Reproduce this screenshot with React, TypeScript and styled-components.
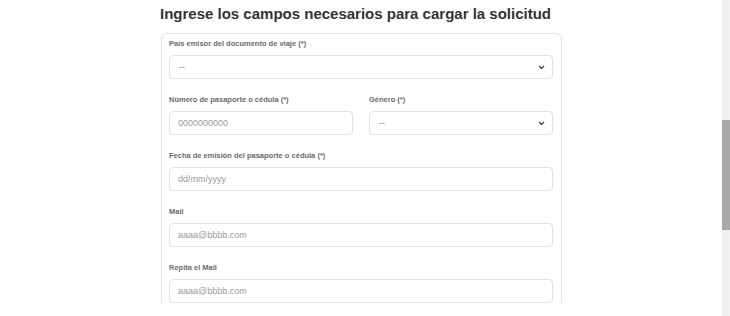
import React from "react";
import styled, { createGlobalStyle } from "styled-components";

const Global = createGlobalStyle`
  html, body { margin: 0; padding: 0; background: #ffffff; overflow: hidden; }
  body { font-family: "Liberation Sans", Arial, sans-serif; }
  * { box-sizing: border-box; }
`;

const Page = styled.div`
  display: flex;
  width: 730px;
  height: 316px;
  overflow: hidden;
`;

const Main = styled.main`
  flex: 1;
  padding-left: 161px;
`;

const Title = styled.h1`
  margin: 4px 0 0 -1px;
  font-size: 15px;
  line-height: 20px;
  font-weight: 700;
  color: #333333;
`;

const Card = styled.div`
  margin-top: 9px;
  width: 401px;
  border: 1px solid #e4e4e4;
  border-bottom: none;
  border-radius: 6px 6px 0 0;
  padding: 5px 8px 0 7px;
  display: flex;
  flex-direction: column;
  gap: 16px;
`;

const Row = styled.div`
  display: grid;
  grid-template-columns: 1fr 1fr;
  column-gap: 16px;
`;

const Field = styled.div`
  display: flex;
  flex-direction: column;
`;

const Label = styled.label`
  font-size: 7.5px;
  line-height: 10px;
  font-weight: 700;
  color: #6b6b6b;
  margin-bottom: 6px;
`;

const Input = styled.input`
  height: 24px;
  width: 100%;
  border: 1px solid #e2e2e2;
  border-radius: 4px;
  padding: 0 8px;
  font-family: "Liberation Sans", Arial, sans-serif;
  font-size: 9px;
  color: #333;
  background: #fff;
  outline: none;
  &::placeholder { color: #9a9a9a; }
`;

const SelectBox = styled.div`
  height: 24px;
  width: 100%;
  border: 1px solid #e2e2e2;
  border-radius: 4px;
  padding: 0 7px 0 9px;
  display: flex;
  align-items: center;
  justify-content: space-between;
  font-size: 9px;
  color: #888;
  background: #fff;
`;

const Scrollbar = styled.div`
  width: 8px;
  height: 316px;
  background: #f1f1f1;
  display: flex;
  flex-direction: column;
  align-items: stretch;
  padding-top: 120px;
`;

const Thumb = styled.div`
  height: 110px;
  background: #a8a8a8;
`;

const Chevron = () => (
  <svg width="7" height="5" viewBox="0 0 7 5">
    <path d="M1 1 L3.5 3.5 L6 1" stroke="#444" strokeWidth="1.3" fill="none" />
  </svg>
);

const Select = () => (
  <SelectBox>
    <span>--</span>
    <Chevron />
  </SelectBox>
);

export default function App() {
  return (
    <Page>
      <Global />
      <Main>
        <Title>Ingrese los campos necesarios para cargar la solicitud</Title>
        <Card>
          <Field>
            <Label>País emisor del documento de viaje (*)</Label>
            <Select />
          </Field>
          <Row>
            <Field>
              <Label>Número de pasaporte o cédula (*)</Label>
              <Input placeholder="0000000000" />
            </Field>
            <Field>
              <Label>Género (*)</Label>
              <Select />
            </Field>
          </Row>
          <Field>
            <Label>Fecha de emisión del pasaporte o cédula (*)</Label>
            <Input placeholder="dd/mm/yyyy" />
          </Field>
          <Field>
            <Label>Mail</Label>
            <Input placeholder="aaaa@bbbb.com" />
          </Field>
          <Field>
            <Label>Repita el Mail</Label>
            <Input placeholder="aaaa@bbbb.com" />
          </Field>
        </Card>
      </Main>
      <Scrollbar>
        <Thumb />
      </Scrollbar>
    </Page>
  );
}
